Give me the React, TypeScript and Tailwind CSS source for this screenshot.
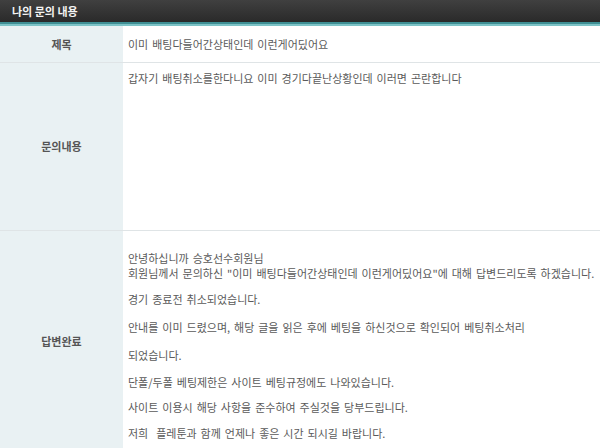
const font = { fontFamily: '"Noto Sans CJK KR", "Noto Sans", sans-serif' };

function Row({ label, children, className }: { label: string; children: React.ReactNode; className?: string }) {
  return (
    <div className={`flex border-b border-[#dfe4e6] ${className ?? ''}`}>
      <div className="w-[123px] shrink-0 bg-[#e9f1f3] flex items-center justify-center text-[11px] font-bold text-[#555]">
        {label}
      </div>
      <div className="flex-1 bg-white pl-[5px] text-[11px] [word-spacing:1.5px] text-[#5a5a5a]">{children}</div>
    </div>
  );
}

export default function App() {
  return (
    <div className="w-[600px] h-[448px] overflow-hidden bg-white" style={font}>
      <div className="h-[22px] bg-gradient-to-b from-[#404040] to-[#2a2a2a] flex items-center pl-[12px] text-[11px] font-bold text-[#f4f4f4]">
        나의 문의 내용
      </div>
      <div className="h-[2px] bg-[#3f8f94]" />
      <div className="h-[2px] bg-[#7cc3c6]" />
      <Row label="제목" className="h-[37px]">
        <div className="h-full flex items-center">이미 배팅다들어간상태인데 이런게어딨어요</div>
      </Row>
      <Row label="문의내용" className="h-[168px]">
        <div className="pt-[8px] leading-[15px]">갑자기 배팅취소를한다니요 이미 경기다끝난상황인데 이러면 곤란합니다</div>
      </Row>
      <Row label="답변완료" className="h-[220px] border-b-0">
        <div className="pt-[20px] leading-[15px]">
          <p>안녕하십니까 승호선수회원님</p>
          <p>회원님께서 문의하신 "이미 배팅다들어간상태인데 이런게어딨어요"에 대해 답변드리도록 하겠습니다.</p>
          <p className="mt-[11px]">경기 종료전 취소되었습니다.</p>
          <p className="mt-[13px]">안내를 이미 드렸으며, 해당 글을 읽은 후에 베팅을 하신것으로 확인되어 베팅취소처리</p>
          <p className="mt-[13px]">되었습니다.</p>
          <p className="mt-[12px]">단폴/두폴 베팅제한은 사이트 베팅규정에도 나와있습니다.</p>
          <p className="mt-[10px]">사이트 이용시 해당 사항을 준수하여 주실것을 당부드립니다.</p>
          <p className="mt-[11px]">저희&nbsp; 플레툰과 함께 언제나 좋은 시간 되시길 바랍니다.</p>
        </div>
      </Row>
    </div>
  );
}
